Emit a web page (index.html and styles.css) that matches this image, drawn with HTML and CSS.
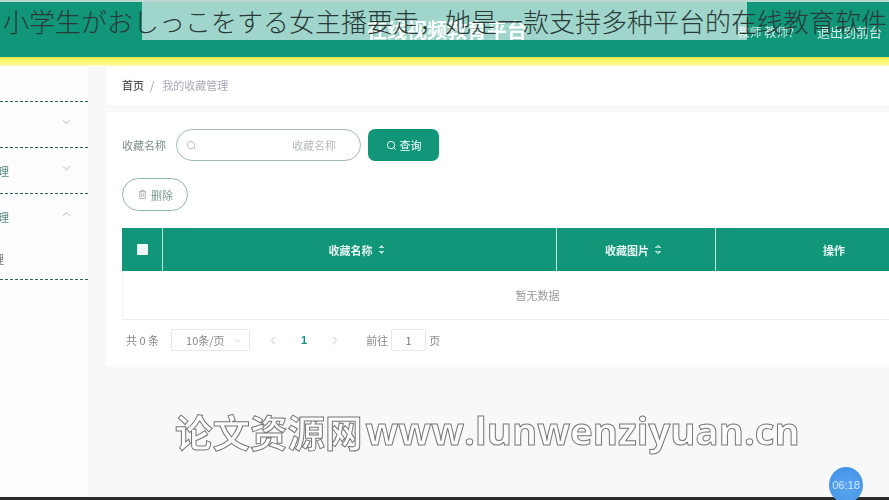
FILE: index.html
```html
<!DOCTYPE html>
<html lang="zh">
<head>
  <meta charset="UTF-8">
  <title>我的收藏管理</title>
  <link rel="stylesheet" href="styles.css">
</head>
<body>
  <div class="video">
    <header class="topbar">
      <div class="brand">在线视频教育平台</div>
      <div class="user">
        <span class="user-name">教师 教师?</span>
        <span>退出到前台</span>
      </div>
    </header>
    <div class="stripe"></div>

    <div class="layout">
      <aside class="sidebar">
        <div class="nav-top"></div>
        <div class="nav-row">
          <span></span>
          <svg class="chev" viewBox="0 0 10 6"><path d="M1 1l4 4 4-4"/></svg>
        </div>
        <div class="nav-row">
          <span class="nav-label">管理</span>
          <svg class="chev" viewBox="0 0 10 6"><path d="M1 1l4 4 4-4"/></svg>
        </div>
        <div class="nav-row open">
          <span class="nav-label">管理</span>
          <svg class="chev" viewBox="0 0 10 6"><path d="M1 5l4-4 4 4"/></svg>
        </div>
        <div class="nav-sub"><span>管理</span></div>
      </aside>

      <main class="content">
        <div class="crumbs">
          <b>首页</b><i>/</i><span>我的收藏管理</span>
        </div>

        <section class="panel">
          <form class="search">
            <label>收藏名称</label>
            <div class="search-input">
              <svg class="ico" viewBox="0 0 12 12"><circle cx="5.5" cy="5.5" r="4"/><path d="M8.5 8.5l2 2"/></svg>
              <span>收藏名称</span>
            </div>
            <button type="button" class="btn-query">
              <svg class="ico" viewBox="0 0 12 12"><circle cx="5.5" cy="5.5" r="4"/><path d="M8.5 8.5l2 2"/></svg>
              查询
            </button>
          </form>

          <button type="button" class="btn-del">
            <svg class="ico" viewBox="0 0 12 12"><path d="M2 3h8M4.5 3V1.5h3V3M3 3v7.5h6V3M5 5v3.5M7 5v3.5"/></svg>
            删除
          </button>

          <div class="table">
            <div class="thead">
              <div class="th th-check"><span class="checkbox"></span></div>
              <div class="th th-name">收藏名称 <span class="sort"></span></div>
              <div class="th th-pic">收藏图片 <span class="sort"></span></div>
              <div class="th th-op">操作</div>
            </div>
            <div class="empty">暂无数据</div>
          </div>

          <div class="pager">
            <span>共 0 条</span>
            <div class="size">10条/页 <svg class="chev" viewBox="0 0 10 6"><path d="M1 1l4 4 4-4"/></svg></div>
            <svg class="arrow" viewBox="0 0 6 10"><path d="M5 1L1 5l4 4"/></svg>
            <b class="page">1</b>
            <svg class="arrow" viewBox="0 0 6 10"><path d="M1 1l4 4-4 4"/></svg>
            <span class="goto">前往</span>
            <div class="jump">1</div>
            <span>页</span>
          </div>
        </section>

        <div class="watermark"><span class="wm-cn">论文资源网</span><span class="wm-en">www.lunwenziyuan.cn</span></div>
      </main>
    </div>
    <div class="player-bar"></div>
  </div>

  <div class="band"></div>
  <h1 class="caption">小学生がおしっこをする女主播要走，她是一款支持多种平台的在线教育软件</h1>
  <div class="clock">06:18</div>
</body>
</html>
```

FILE: styles.css
```css
html, body {
  margin: 0;
  height: 500px;
  overflow: hidden;
}
body {
  font-family: "Noto Sans CJK SC", "Liberation Sans", sans-serif;
  font-size: 11px;
  color: #666;
  background: #fff;
}
button {
  font: inherit;
  cursor: pointer;
}
svg {
  display: block;
  fill: none;
  stroke: currentColor;
}

.video {
  width: 889px;
  height: 500px;
  display: flex;
  flex-direction: column;
  overflow: hidden;
  filter: blur(0.7px);
}

/* header */
.topbar {
  height: 55px;
  flex: none;
  margin-top: 2px;
  background: #11967a;
  color: #fff;
  position: relative;
  display: flex;
  justify-content: flex-end;
  align-items: flex-start;
}
.topbar::before {
  content: "";
  position: absolute;
  left: 0;
  right: 0;
  top: -2px;
  height: 2px;
  background: #b9d9d1;
}
.brand {
  position: absolute;
  left: 367px;
  top: 15px;
  font-size: 20px;
  font-weight: 700;
  line-height: 26px;
  white-space: nowrap;
}
.user {
  display: flex;
  align-items: center;
  gap: 23px;
  padding: 21px 7px 0 0;
  font-size: 13px;
  line-height: 18px;
  color: #d4ece6;
}
.user-name {
  font-size: 12px;
}
.stripe {
  height: 10px;
  flex: none;
  background: linear-gradient(#d6e84e, #fbf36a 30%, #fdf98f 75%, #fff);
}

.layout {
  flex: 1;
  display: flex;
  min-height: 0;
  background: #f8f8f8;
}

/* sidebar */
.sidebar {
  width: 88px;
  flex: none;
  background: #fdfdfd;
  margin-right: 18px;
}
.nav-top {
  height: 34px;
  border-bottom: 1px dashed #2f5f5a;
}
.nav-row {
  height: 45px;
  display: flex;
  align-items: center;
  justify-content: space-between;
  padding-right: 17px;
  border-bottom: 1px dashed #2f5f5a;
  color: #5b8a82;
}
.nav-row .chev {
  width: 9px;
  height: 6px;
  color: #aab5b3;
  margin-top: -5px;
}
.nav-row.open {
  border-bottom: none;
}
.nav-label {
  margin-left: -13px;
}
.nav-sub {
  height: 40px;
  border-bottom: 1px dashed #2f5f5a;
  display: flex;
  align-items: center;
  color: #777;
}
.nav-sub span {
  margin-left: -18px;
}

/* content */
.content {
  flex: 1;
  min-width: 0;
  position: relative;
}
.crumbs {
  height: 36px;
  padding: 0 0 2px 16px;
  display: flex;
  align-items: center;
  gap: 6px;
  background: #fff;
  margin-bottom: 7px;
}
.crumbs b {
  color: #555;
  font-weight: 500;
}
.crumbs i {
  color: #a98;
  font-style: normal;
}
.crumbs span {
  color: #aab;
  margin-left: 2px;
}

.panel {
  height: 255px;
  box-sizing: border-box;
  padding: 17px 0 0 16px;
  background: #fff;
  width: 860px;
}
.search {
  height: 32px;
  display: flex;
  align-items: center;
}
.search label {
  width: 54px;
  color: #7d8f8b;
}
.search-input {
  width: 185px;
  height: 32px;
  box-sizing: border-box;
  border: 1.5px solid #a3bdb6;
  border-radius: 16px;
  display: flex;
  align-items: center;
  justify-content: space-between;
  padding: 0 24px 0 9px;
  color: #b5bcbb;
}
.search-input .ico {
  color: #bbb;
}
.ico {
  width: 11px;
  height: 11px;
}
.btn-query {
  width: 71px;
  height: 32px;
  margin-left: 7px;
  border: none;
  border-radius: 7px;
  background: #11967a;
  color: #fff;
  display: flex;
  align-items: center;
  justify-content: center;
  gap: 3px;
}
.btn-del {
  width: 66px;
  height: 33px;
  display: flex;
  align-items: center;
  justify-content: center;
  gap: 3px;
  margin: 17px 0 17px;
  border: 1.5px solid #8fb5aa;
  border-radius: 17px;
  background: #fff;
  color: #7b9a92;
}
.btn-del .ico {
  color: #aaa;
}

.table {
  width: 830px;
}
.thead {
  height: 43px;
  display: flex;
  background: #11967a;
  color: #e6f5f1;
  font-weight: 700;
}
.th {
  display: flex;
  align-items: center;
  justify-content: center;
  gap: 5px;
  box-sizing: border-box;
  border-right: 1px solid #bfe5db;
}
.th-check { width: 41px; }
.th-name { width: 394px; padding-right: 6px; }
.th-pic { width: 159px; padding-right: 6px; }
.th-op { flex: 1; border-right: none; }
.checkbox {
  width: 11px;
  height: 11px;
  background: #eef8f5;
  border-radius: 1px;
}
.sort {
  width: 7px;
  height: 9px;
  background:
    linear-gradient(to top left, #b5e0d5 50%, transparent 50%) 0 0 / 50% 3px no-repeat,
    linear-gradient(to top right, #b5e0d5 50%, transparent 50%) 100% 0 / 50% 3px no-repeat,
    linear-gradient(to bottom left, #b5e0d5 50%, transparent 50%) 0 100% / 50% 3px no-repeat,
    linear-gradient(to bottom right, #b5e0d5 50%, transparent 50%) 100% 100% / 50% 3px no-repeat;
}
.empty {
  height: 48px;
  display: flex;
  align-items: center;
  justify-content: center;
  border-bottom: 1px solid #eee;
  border-left: 1px solid #f4f4f4;
  color: #9a9a9a;
}

.pager {
  display: flex;
  align-items: center;
  height: 22px;
  margin-top: 9px;
  padding-left: 4px;
  color: #888;
}
.size {
  width: 79px;
  height: 22px;
  box-sizing: border-box;
  margin: 0 20px 0 12px;
  padding: 0 8px 0 14px;
  border: 1px solid #e8e8e8;
  border-radius: 2px;
  display: flex;
  align-items: center;
  justify-content: space-between;
}
.size .chev {
  width: 7px;
  height: 5px;
  color: #c5c5c5;
}
.arrow {
  width: 6px;
  height: 9px;
  color: #bbb;
}
.page {
  margin: 0 25px;
  color: #11967a;
  font-family: "Liberation Sans", sans-serif;
  font-size: 11px;
}
.goto {
  margin-left: 28px;
}
.jump {
  width: 35px;
  height: 22px;
  box-sizing: border-box;
  margin: 0 3px;
  border: 1px solid #e8e8e8;
  border-radius: 2px;
  display: flex;
  align-items: center;
  justify-content: center;
  color: #777;
}

.watermark {
  margin: 44px 0 0 69px;
  display: flex;
  align-items: center;
  height: 38px;
  white-space: nowrap;
  color: #fcfcfc;
  -webkit-text-stroke: 1px #777;
}
.wm-cn {
  font-size: 37.5px;
  font-weight: 700;
}
.wm-en {
  margin-left: 3px;
  font-family: "Open Sans", sans-serif;
  font-size: 38.4px;
  font-weight: 700;
}

.player-bar {
  height: 3px;
  flex: none;
  background: #2c2c2c;
}

/* overlays */
.band {
  position: absolute;
  left: 142px;
  top: 2px;
  width: 605px;
  height: 38px;
  background: rgba(255, 255, 255, 0.6);
}
.caption {
  position: absolute;
  left: 3px;
  top: 4px;
  margin: 0;
  font-family: "Noto Sans CJK JP", sans-serif;
  font-size: 26px;
  line-height: 34px;
  font-weight: 300;
  color: #2a3a37;
  white-space: nowrap;
}
.clock {
  position: absolute;
  left: 829px;
  top: 467px;
  width: 34px;
  height: 36px;
  border-radius: 50%;
  background: radial-gradient(circle at 50% 60%, #5aa5ee, #3f8fe6);
  color: #cfe4f7;
  font-family: "Liberation Sans", sans-serif;
  font-size: 11px;
  display: flex;
  align-items: center;
  justify-content: center;
}
```
